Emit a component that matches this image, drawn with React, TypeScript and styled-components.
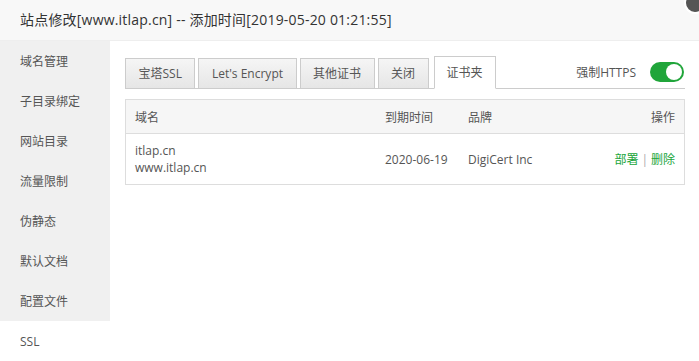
import styled, { createGlobalStyle } from "styled-components";

const GlobalStyle = createGlobalStyle`
  html, body {
    margin: 0;
    padding: 0;
    background: #fff;
  }
  body {
    font-family: "Open Sans", "Noto Sans CJK SC", sans-serif;
    color: #333;
  }
`;

const Layer = styled.div`
  position: relative;
  width: 699px;
  height: 361px;
  overflow: hidden;
  background: #fff;
`;

const TitleBar = styled.div`
  height: 40px;
  line-height: 40px;
  padding-left: 20px;
  font-size: 14px;
  letter-spacing: 0.2px;
  color: #333;
  background: #f8f8f8;
  border-bottom: 1px solid #eee;
`;

const CloseBtn = styled.span`
  position: absolute;
  top: -8px;
  right: -7px;
  width: 18px;
  height: 18px;
  border-radius: 50%;
  background: #555;
  border: 2px solid #fff;
`;

const Body = styled.div`
  display: flex;
  height: 320px;
`;

const Side = styled.ul`
  list-style: none;
  margin: 0;
  padding: 0;
  width: 110px;
  flex-shrink: 0;
`;

const SideItem = styled.li<{ $active?: boolean }>`
  height: 40px;
  line-height: 41px;
  padding-left: 20px;
  font-size: 12px;
  color: #555;
  background: ${(p) => (p.$active ? "#fff" : "#f0f0f0")};
`;

const Main = styled.div`
  flex: 1;
  padding: 16px 14px 0 15px;
`;

const TabBar = styled.div`
  display: flex;
  align-items: flex-end;
  border-bottom: 1px solid #ccc;
  height: 31px;
`;

const Tabs = styled.div`
  display: flex;
  align-items: flex-end;
  gap: 3px;
  flex: 1;
`;

const Tab = styled.span<{ $active?: boolean }>`
  height: ${(p) => (p.$active ? "31px" : "29px")};
  line-height: ${(p) => (p.$active ? "32px" : "29px")};
  padding: 0 ${(p) => (p.$active ? "12px" : "12.5px")};
  margin-bottom: ${(p) => (p.$active ? "-1px" : "0")};
  margin-left: ${(p) => (p.$active ? "2px" : "0")};
  font-size: 12px;
  color: #555;
  border: 1px solid #ccc;
  border-bottom: ${(p) => (p.$active ? "1px solid #fff" : "none")};
  background: ${(p) =>
    p.$active ? "#fff" : "linear-gradient(#f5f5f5, #e6e6e6)"};
`;

const Force = styled.div`
  display: flex;
  align-items: center;
  gap: 14px;
  height: 30px;
  margin-bottom: 1px;
  font-size: 12px;
  color: #555;
`;

const Switch = styled.span`
  position: relative;
  width: 34px;
  height: 20px;
  margin-right: 1px;
  border-radius: 10px;
  background: #20a53a;
  &::after {
    content: "";
    position: absolute;
    top: 2px;
    right: 2px;
    width: 16px;
    height: 16px;
    border-radius: 50%;
    background: #fff;
  }
`;

const Table = styled.table`
  width: 560px;
  margin-top: 10px;
  border-collapse: collapse;
  font-size: 12px;
  color: #555;
  border: 1px solid #ddd;
`;

const Th = styled.th<{ $right?: boolean }>`
  height: 33px;
  padding: 0 9px;
  font-weight: normal;
  text-align: ${(p) => (p.$right ? "right" : "left")};
  background: #f6f6f6;
  border-bottom: 1px solid #ddd;
`;

const Td = styled.td<{ $right?: boolean }>`
  height: 50px;
  padding: 0 9px;
  line-height: 17px;
  text-align: ${(p) => (p.$right ? "right" : "left")};
`;

const Link = styled.a`
  color: #20a53a;
  text-decoration: none;
`;

const Sep = styled.span`
  color: #aaa;
  margin: 0 3px;
`;

const menu = ["域名管理", "子目录绑定", "网站目录", "流量限制", "伪静态", "默认文档", "配置文件", "SSL"];
const tabs = ["宝塔SSL", "Let's Encrypt", "其他证书", "关闭", "证书夹"];

export default function App() {
  return (
    <Layer>
      <GlobalStyle />
      <TitleBar>站点修改[www.itlap.cn] -- 添加时间[2019-05-20 01:21:55]</TitleBar>
      <CloseBtn />
      <Body>
        <Side>
          {menu.map((m) => (
            <SideItem key={m} $active={m === "SSL"}>
              {m}
            </SideItem>
          ))}
        </Side>
        <Main>
          <TabBar>
            <Tabs>
              {tabs.map((t) => (
                <Tab key={t} $active={t === "证书夹"}>
                  {t}
                </Tab>
              ))}
            </Tabs>
            <Force>
              强制HTTPS
              <Switch />
            </Force>
          </TabBar>
          <Table>
            <thead>
              <tr>
                <Th style={{ width: 232 }}>域名</Th>
                <Th style={{ width: 65 }}>到期时间</Th>
                <Th>品牌</Th>
                <Th $right>操作</Th>
              </tr>
            </thead>
            <tbody>
              <tr>
                <Td>
                  itlap.cn
                  <br />
                  www.itlap.cn
                </Td>
                <Td>2020-06-19</Td>
                <Td>DigiCert Inc</Td>
                <Td $right>
                  <Link>部署</Link>
                  <Sep>|</Sep>
                  <Link>删除</Link>
                </Td>
              </tr>
            </tbody>
          </Table>
        </Main>
      </Body>
    </Layer>
  );
}
